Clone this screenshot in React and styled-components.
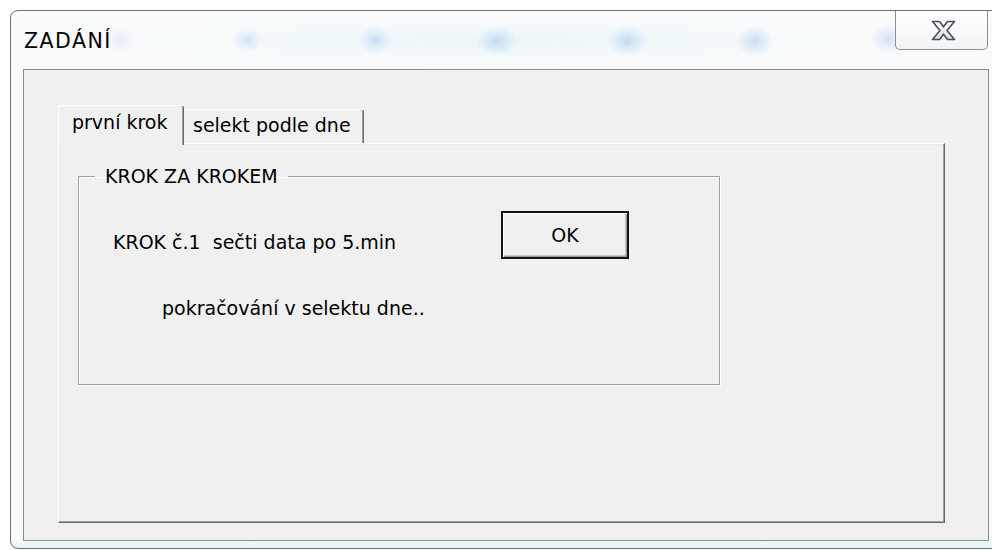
import React from 'react';
import styled, { createGlobalStyle } from 'styled-components';

const GlobalStyle = createGlobalStyle`
  html, body {
    margin: 0;
    padding: 0;
    background: #ffffff;
    overflow: hidden;
  }
  body {
    font-family: "DejaVu Sans", "Liberation Sans", sans-serif;
  }
  *, *::before, *::after {
    box-sizing: border-box;
  }
`;

const Desktop = styled.div`
  width: 992px;
  height: 550px;
  padding: 10px 0 0 10px;
  overflow: hidden;
  background: #ffffff;
`;

const Window = styled.div`
  width: 992px;
  display: flex;
  flex-direction: column;
  border: 1px solid #707070;
  border-radius: 8px;
  padding-bottom: 7px;
  background:
    linear-gradient(to top, rgba(214, 243, 250, 0.7), rgba(255, 255, 255, 0) 9px),
    #f8fafb;
`;

/* soft reflections seen through the glass frame */
const spot = (x, y, w, h, a) =>
  `radial-gradient(ellipse ${w}px ${h}px at ${x}px ${y}px, rgba(172, 200, 241, ${a}) 0%, rgba(180, 206, 242, ${a * 0.55}) 45%, rgba(200, 225, 245, 0) 100%)`;

const TitleBar = styled.div`
  height: 58px;
  display: flex;
  align-items: flex-start;
  padding: 0 13px;
  background:
    ${spot(109, 29, 14, 12, 0.3)},
    ${spot(236, 29, 15, 13, 0.45)},
    ${spot(364, 29, 17, 14, 0.6)},
    ${spot(486, 30, 21, 15, 0.65)},
    ${spot(616, 30, 21, 15, 0.65)},
    ${spot(744, 30, 19, 15, 0.6)},
    ${spot(877, 28, 17, 15, 0.5)},
    radial-gradient(ellipse 360px 24px at 480px 30px, rgba(226, 246, 250, 0.6), rgba(226, 246, 250, 0)),
    transparent;
`;

const Title = styled.div`
  margin-top: 18px;
  font-size: 20.5px;
  line-height: 24px;
  letter-spacing: 1.5px;
  color: #000000;
`;

const CloseButton = styled.div`
  margin-left: auto;
  width: 93px;
  height: 39px;
  display: flex;
  align-items: center;
  justify-content: center;
  padding-left: 3px;
  border: 1px solid #8e8e8e;
  border-top: none;
  border-radius: 0 0 5px 5px;
  background: linear-gradient(to bottom, #ffffff, #f1f4f6);
`;

const ClientArea = styled.div`
  margin: 0 12px;
  border: 1px solid #8b8b8b;
  background: #f0f0f0;
  padding: 35px 43px 17px 34px;
`;

const TabStrip = styled.div`
  height: 38px;
  display: flex;
  align-items: flex-end;
`;

const Tab = styled.div`
  position: relative;
  font-size: 19px;
  line-height: 22px;
  color: #000000;
  white-space: nowrap;
  background: #f0f0f0;
  border-top: 1px solid #ffffff;
  border-right: 1px solid #696969;
  box-shadow: inset -1px 0 0 #a0a0a0;
  border-radius: 3px 3px 0 0;
  width: ${(p) => (p.$active ? '126px' : '180px')};
  height: ${(p) => (p.$active ? '40px' : '34px')};
  margin-bottom: ${(p) => (p.$active ? '-2px' : '0')};
  padding: ${(p) => (p.$active ? '5px 0 0 13px' : '4px 0 0 9px')};
  border-left: ${(p) => (p.$active ? '1px solid #ffffff' : 'none')};
  z-index: ${(p) => (p.$active ? 1 : 0)};
`;

const TabPage = styled.div`
  height: 380px;
  border: 1px solid;
  border-color: #ffffff #696969 #696969 #ffffff;
  box-shadow: inset -1px -1px 0 #a0a0a0, inset 1px 1px 0 #e9e9e9;
  padding: 21px 0 0 19px;
`;

const GroupBox = styled.fieldset`
  width: 642px;
  height: 220px;
  margin: 0;
  padding: 0;
  min-inline-size: 0;
  border: 1px solid #a0a0a0;
  box-shadow: inset 1px 1px 0 #ffffff, 1px 1px 0 #ffffff;
`;

const GroupCaption = styled.legend`
  margin-left: 16px;
  padding: 0 10px;
  font-size: 19px;
  line-height: 22px;
  color: #000000;
`;

const StepRow = styled.div`
  display: grid;
  grid-template-columns: 388px 128px;
  align-items: start;
  margin-top: 24px;
  padding-left: 34px;
`;

const Caption = styled.div`
  font-size: 19px;
  line-height: 22px;
  color: #000000;
  white-space: pre;
  padding-top: ${(p) => p.$top || 0}px;
`;

const NoteRow = styled.div`
  margin-top: 38px;
  padding-left: 83px;
`;

const OkButton = styled.button`
  width: 128px;
  height: 48px;
  padding: 0;
  font-family: inherit;
  font-size: 19px;
  line-height: 22px;
  color: #000000;
  background: #f0f0f0;
  border: 2px solid #141414;
  box-shadow: inset 1px 1px 0 #ffffff, inset -1px -1px 0 #9a9a9a, inset -2px -2px 0 #c4c4c4;
  cursor: default;
`;

function CloseGlyph() {
  return (
    <svg width="25" height="21" viewBox="0 0 25 21">
      <defs>
        <linearGradient id="xfill" x1="0" y1="0" x2="0" y2="1">
          <stop offset="0" stopColor="#ffffff" />
          <stop offset="1" stopColor="#d9dde5" />
        </linearGradient>
      </defs>
      <path
        d="M1.5 1.5 H8.5 L12.5 6.8 L16.5 1.5 H23.5 L16 10.5 L23.5 19.5 H16.5 L12.5 14.2 L8.5 19.5 H1.5 L9 10.5 Z"
        fill="url(#xfill)"
        stroke="#4d4e5a"
        strokeWidth="1.6"
        strokeLinejoin="round"
      />
    </svg>
  );
}

export default function App() {
  return (
    <>
      <GlobalStyle />
      <Desktop>
        <Window>
          <TitleBar>
            <Title>ZADÁNÍ</Title>
            <CloseButton>
              <CloseGlyph />
            </CloseButton>
          </TitleBar>
          <ClientArea>
            <TabStrip>
              <Tab $active>první krok</Tab>
              <Tab>selekt podle dne</Tab>
            </TabStrip>
            <TabPage>
              <GroupBox>
                <GroupCaption>KROK ZA KROKEM</GroupCaption>
                <StepRow>
                  <Caption $top={20}>{'KROK č.1  sečti data po 5.min'}</Caption>
                  <OkButton>OK</OkButton>
                </StepRow>
                <NoteRow>
                  <Caption>pokračování v selektu dne..</Caption>
                </NoteRow>
              </GroupBox>
            </TabPage>
          </ClientArea>
        </Window>
      </Desktop>
    </>
  );
}
